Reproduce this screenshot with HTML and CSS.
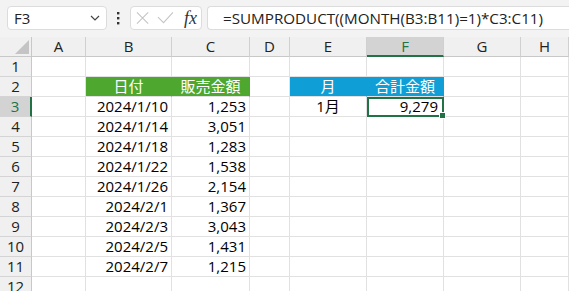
FILE: index.html
```html
<!DOCTYPE html>
<html lang="ja">

<head>
  <meta charset="UTF-8">
  <meta name="viewport" content="width=device-width, initial-scale=1.0">
  <title>SUMPRODUCT</title>
  <link rel="stylesheet" href="styles.css">
</head>

<body>

  <div class="formula-bar">
    <div class="name-box">
      <span>F3</span>
      <svg class="chevron" width="10" height="6" viewBox="0 0 10 6"><polyline points="1,1 5,5 9,1" fill="none" stroke="#444" stroke-width="1.2"/></svg>
    </div>
    <svg class="dots" width="4" height="14" viewBox="0 0 4 14"><rect x="1" y="1" width="2.4" height="2.4" fill="#333"/><rect x="1" y="6" width="2.4" height="2.4" fill="#333"/><rect x="1" y="11" width="2.4" height="2.4" fill="#333"/></svg>
    <div class="edit-box">
      <svg width="14" height="14" viewBox="0 0 14 14"><path d="M1 1 L13 13 M13 1 L1 13" stroke="#c4c4c4" stroke-width="1.1" fill="none"/></svg>
      <svg width="18" height="14" viewBox="0 0 18 14"><path d="M1 6 L7 12 L17 1" stroke="#c4c4c4" stroke-width="1.1" fill="none"/></svg>
      <span class="fx">fx</span>
    </div>
    <div class="formula-box">=SUMPRODUCT((MONTH(B3:B11)=1)*C3:C11)</div>
  </div>

  <div class="sheet">
    <div class="corner"><svg width="14" height="14" viewBox="0 0 14 14"><polygon points="14,0 14,14 0,14" fill="#c4c4c4"/></svg></div>
    <div class="col-head">A</div>
    <div class="col-head">B</div>
    <div class="col-head">C</div>
    <div class="col-head">D</div>
    <div class="col-head">E</div>
    <div class="col-head sel">F</div>
    <div class="col-head">G</div>
    <div class="col-head">H</div>

    <div class="row-head">1</div>
    <div class="cell"></div><div class="cell"></div><div class="cell"></div><div class="cell"></div><div class="cell"></div><div class="cell"></div><div class="cell"></div><div class="cell"></div>

    <div class="row-head">2</div>
    <div class="cell"></div>
    <div class="cell green center">日付</div>
    <div class="cell green center">販売金額</div>
    <div class="cell"></div>
    <div class="cell blue center">月</div>
    <div class="cell blue center">合計金額</div>
    <div class="cell"></div><div class="cell"></div>

    <div class="row-head sel">3</div>
    <div class="cell"></div>
    <div class="cell num">2024/1/10</div>
    <div class="cell num">1,253</div>
    <div class="cell"></div>
    <div class="cell center">1月</div>
    <div class="cell num active">9,279<span class="handle"></span></div>
    <div class="cell"></div><div class="cell"></div>

    <div class="row-head">4</div>
    <div class="cell"></div><div class="cell num">2024/1/14</div><div class="cell num">3,051</div>
    <div class="cell"></div><div class="cell"></div><div class="cell"></div><div class="cell"></div><div class="cell"></div>

    <div class="row-head">5</div>
    <div class="cell"></div><div class="cell num">2024/1/18</div><div class="cell num">1,283</div>
    <div class="cell"></div><div class="cell"></div><div class="cell"></div><div class="cell"></div><div class="cell"></div>

    <div class="row-head">6</div>
    <div class="cell"></div><div class="cell num">2024/1/22</div><div class="cell num">1,538</div>
    <div class="cell"></div><div class="cell"></div><div class="cell"></div><div class="cell"></div><div class="cell"></div>

    <div class="row-head">7</div>
    <div class="cell"></div><div class="cell num">2024/1/26</div><div class="cell num">2,154</div>
    <div class="cell"></div><div class="cell"></div><div class="cell"></div><div class="cell"></div><div class="cell"></div>

    <div class="row-head">8</div>
    <div class="cell"></div><div class="cell num">2024/2/1</div><div class="cell num">1,367</div>
    <div class="cell"></div><div class="cell"></div><div class="cell"></div><div class="cell"></div><div class="cell"></div>

    <div class="row-head">9</div>
    <div class="cell"></div><div class="cell num">2024/2/3</div><div class="cell num">3,043</div>
    <div class="cell"></div><div class="cell"></div><div class="cell"></div><div class="cell"></div><div class="cell"></div>

    <div class="row-head">10</div>
    <div class="cell"></div><div class="cell num">2024/2/5</div><div class="cell num">1,431</div>
    <div class="cell"></div><div class="cell"></div><div class="cell"></div><div class="cell"></div><div class="cell"></div>

    <div class="row-head">11</div>
    <div class="cell"></div><div class="cell num">2024/2/7</div><div class="cell num">1,215</div>
    <div class="cell"></div><div class="cell"></div><div class="cell"></div><div class="cell"></div><div class="cell"></div>

    <div class="row-head">12</div>
    <div class="cell"></div><div class="cell"></div><div class="cell"></div><div class="cell"></div><div class="cell"></div><div class="cell"></div><div class="cell"></div><div class="cell"></div>
  </div>

</body>

</html>
```

FILE: styles.css
```css
body {
  margin: 0;
  width: 569px;
  height: 291px;
  overflow: hidden;
  background-color: #fff;
  font-family: 'Open Sans', 'Noto Sans CJK JP', sans-serif;
  color: #000;
}

.formula-bar {
  display: flex;
  align-items: center;
  height: 37px;
  padding: 0 0 1px 7px;
  box-sizing: border-box;
  background-color: #f3f3f3;
}

.name-box {
  display: flex;
  align-items: center;
  justify-content: space-between;
  width: 100px;
  height: 24px;
  padding: 0 6px 0 6px;
  box-sizing: border-box;
  background-color: #fff;
  border: 1px solid #dcdcdc;
  border-radius: 4px;
  font-size: 15px;
  color: #222;
}

.dots {
  margin: 0 10px 0 9px;
}

.edit-box {
  display: flex;
  align-items: center;
  gap: 8px;
  width: 72px;
  height: 24px;
  padding: 0 4px 0 5px;
  box-sizing: border-box;
  background-color: #fff;
  border: 1px solid #dcdcdc;
  border-radius: 4px;
}

.fx {
  font-family: 'Liberation Serif', serif;
  font-style: italic;
  font-size: 18px;
  line-height: 1;
  color: #333;
  margin-left: 2px;
}

.formula-box {
  flex: 1;
  margin-left: 5px;
  height: 24px;
  line-height: 22px;
  padding-left: 15px;
  box-sizing: border-box;
  background-color: #fff;
  border: 1px solid #dcdcdc;
  border-right: none;
  border-radius: 4px 0 0 4px;
  font-size: 15.2px;
  color: #222;
  white-space: nowrap;
}

.sheet {
  display: grid;
  grid-template-columns: 32px 54px 86px 78px 40px 77px 77px 77px 1fr;
  grid-auto-rows: 20px;
  font-size: 15px;
}

.corner {
  display: flex;
  align-items: flex-end;
  justify-content: flex-end;
  padding: 0 2px 2px 0;
  background-color: #f0f0f0;
  border-right: 1px solid #c8c8c8;
  border-bottom: 1px solid #c8c8c8;
}

.col-head {
  display: flex;
  align-items: center;
  justify-content: center;
  background-color: #f0f0f0;
  border-right: 1px solid #d0d0d0;
  border-bottom: 1px solid #c8c8c8;
  color: #222;
  line-height: 1;
}

.col-head.sel {
  background-color: #d3d3d3;
  color: #217346;
  border-bottom: 2px solid #217346;
}

.row-head {
  display: flex;
  align-items: center;
  justify-content: center;
  background-color: #f0f0f0;
  border-right: 1px solid #c8c8c8;
  border-bottom: 1px solid #d4d4d4;
  color: #222;
  line-height: 1;
}

.row-head.sel {
  background-color: #d3d3d3;
  color: #217346;
  border-right: 2px solid #217346;
}

.cell {
  display: flex;
  align-items: center;
  padding: 0 3px;
  border-right: 1px solid #e1e1e1;
  border-bottom: 1px solid #e1e1e1;
  white-space: nowrap;
  line-height: 1;
}

.num {
  justify-content: flex-end;
}

.center {
  justify-content: center;
}

.green {
  background-color: #4ea72e;
  border-right-color: #4ea72e;
  color: #fff;
}

.blue {
  background-color: #0f9ed5;
  border-right-color: #0f9ed5;
  color: #fff;
}

.active {
  position: relative;
  outline: 2px solid #217346;
  outline-offset: -2px;
  padding-right: 5px;
}

.handle {
  position: absolute;
  right: -3px;
  bottom: -3px;
  width: 5px;
  height: 5px;
  background-color: #217346;
  border: 1px solid #fff;
}
```
